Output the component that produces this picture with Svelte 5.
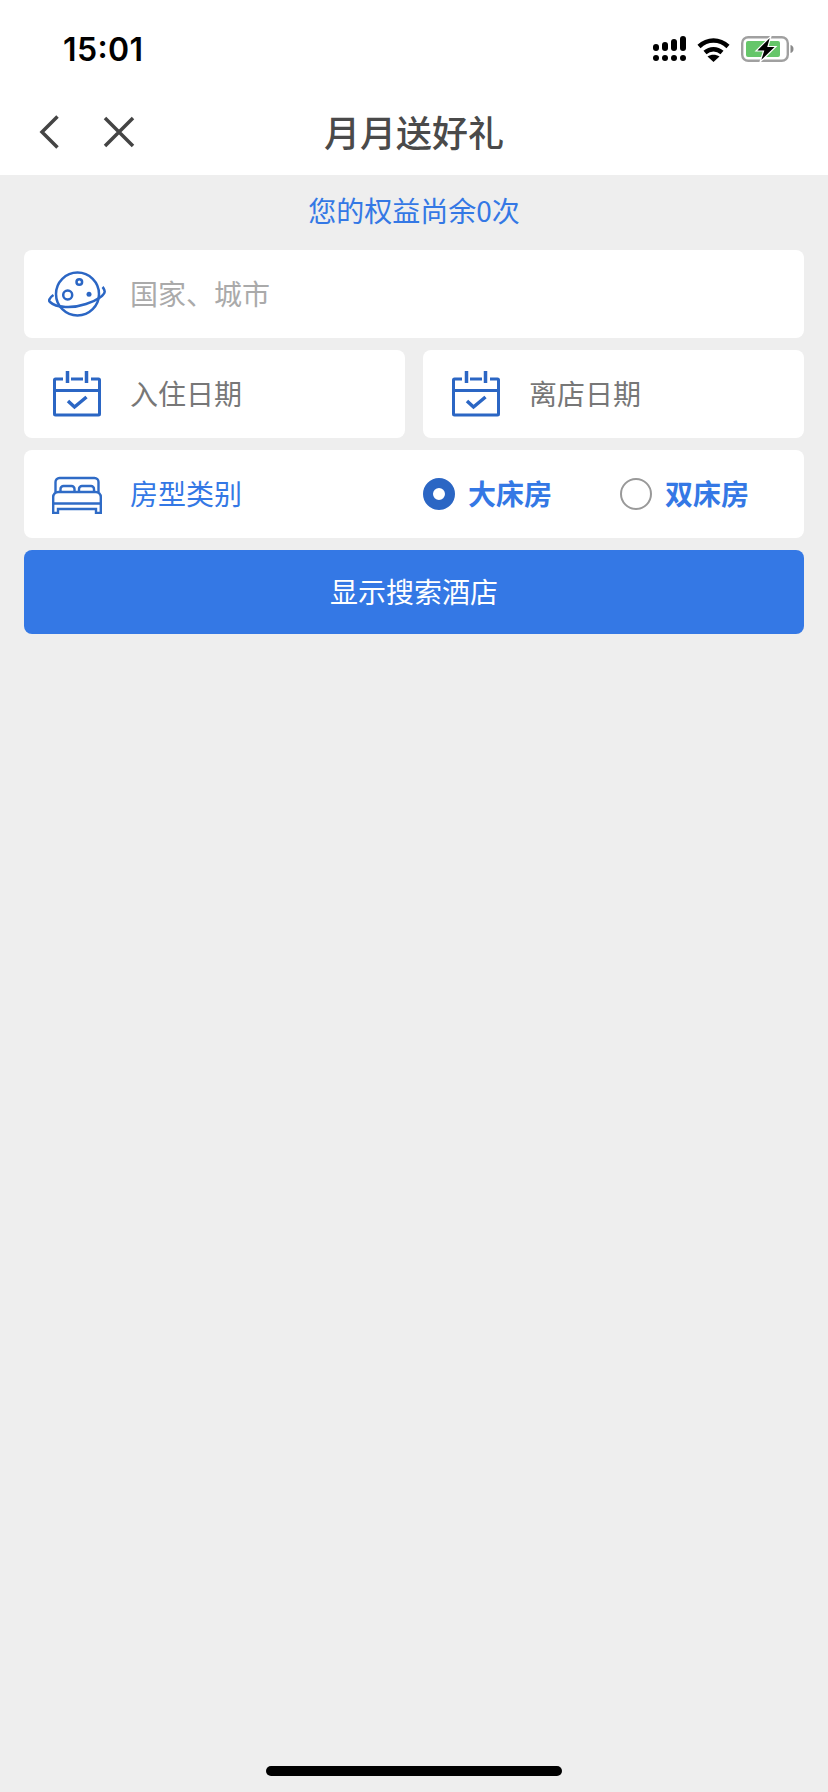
<script>
  let roomType = $state('king')
</script>

{#snippet calendar()}
  <svg width="48" height="46" viewBox="0 0 48 46" fill="none" stroke="#2b66c4" stroke-width="3">
    <path d="M10 8H2.500a1 1 0 0 0-1 1v34a1 1 0 0 0 1 1h43a1 1 0 0 0 1-1V9a1 1 0 0 0-1-1H38" />
    <path d="M18 8h12" />
    <path d="M14.500 0v12M33.500 0v12" stroke-width="3.500" />
    <path d="M1.500 19.500h45" />
    <path d="M15 30l6.500 6 12-10" stroke-width="3.500" />
  </svg>
{/snippet}

<div class="page">
  <div class="top">
    <div class="status">
      <span class="time">15:01</span>
      <div class="status-icons">
        <svg width="33" height="26" viewBox="0 0 33 26" fill="#000">
          <rect x="0" y="8" width="6" height="7" rx="3" />
          <rect x="9" y="6" width="6" height="9" rx="3" />
          <rect x="18" y="3" width="6" height="12" rx="3" />
          <rect x="27" y="0" width="6" height="15" rx="3" />
          <circle cx="3" cy="22" r="3" />
          <circle cx="12" cy="22" r="3" />
          <circle cx="21" cy="22" r="3" />
          <circle cx="30" cy="22" r="3" />
        </svg>
        <svg width="33" height="25" viewBox="0 0 33 25" fill="none" stroke="#000" stroke-width="4.500">
          <path d="M2 9.500C10.500 1.500 22.500 1.500 31 9.500" />
          <path d="M8 15.500C13 11 20 11 25 15.500" />
          <path d="M16.500 25l-6-5.500c3.500-2.500 8.500-2.500 12 0z" fill="#000" stroke="none" />
        </svg>
        <svg width="54" height="26" viewBox="0 0 54 26">
          <rect x="1.200" y="1.200" width="45.600" height="23.600" rx="6" fill="#fff" stroke="#a0a0a0" stroke-width="2.400" />
          <rect x="5" y="5" width="34" height="16" rx="2" fill="#66c66a" />
          <path d="M49.500 9c2 .5 3 2 3 4s-1 3.500-3 4z" fill="#8a8a8a" />
          <path d="M30 0 15 15h7.500L19 26l16-15.500h-8L30 0z" fill="#000" stroke="#fff" stroke-width="1.200" />
        </svg>
      </div>
    </div>
    <div class="nav">
      <div class="nav-left">
        <svg width="20" height="34" viewBox="0 0 20 34" fill="none" stroke="#444" stroke-width="3.500">
          <path d="M18.500 1.500 3 17l15.500 15.500" />
        </svg>
        <svg width="32" height="32" viewBox="0 0 32 32" fill="none" stroke="#444" stroke-width="3.500">
          <path d="M2 2l28 28M30 2 2 30" />
        </svg>
      </div>
      <div class="title">月月送好礼</div>
    </div>
  </div>

  <p class="quota">您的权益尚余0次</p>

  <div class="form">
    <div class="card">
      <div class="icon">
        <svg width="58" height="46" viewBox="0 0 58 46" fill="none" stroke="#2b66c4" stroke-width="2.500">
          <circle cx="29.500" cy="23" r="21.500" />
          <path d="M5.500 24C1 27 .5 30 2 31c6 6 23 6.500 36 2 11-3.500 20-9.500 18.500-13.500-.5-1.500-1-2.500-2-3.500" />
          <circle cx="19.700" cy="24" r="4.500" />
          <circle cx="31.300" cy="11" r="2.800" />
          <circle cx="41" cy="23.300" r="2.500" fill="#2b66c4" stroke="none" />
        </svg>
      </div>
      <span class="text placeholder">国家、城市</span>
    </div>

    <div class="dates">
      <div class="card">
        <div class="icon">{@render calendar()}</div>
        <span class="text date-label">入住日期</span>
      </div>
      <div class="card">
        <div class="icon">{@render calendar()}</div>
        <span class="text date-label">离店日期</span>
      </div>
    </div>

    <div class="card">
      <div class="icon bed">
        <svg width="50" height="38" viewBox="0 0 50 38" fill="none" stroke="#2f6bc6" stroke-width="2.400">
          <path d="M3.500 16V6a4 4 0 0 1 4-4h35a4 4 0 0 1 4 4v10" />
          <path d="M8.500 16v-3a3 3 0 0 1 3-3h8a3 3 0 0 1 3 3v3M27 16v-3a3 3 0 0 1 3-3h9a3 3 0 0 1 3 3v3" />
          <path d="M1.200 37V21a5 5 0 0 1 5-5h37.600a5 5 0 0 1 5 5v16h-4.800v-4H6v4z" />
          <path d="M1.200 27.500h47.600" />
        </svg>
      </div>
      <span class="text room-label">房型类别</span>
      <div class="radios">
        <button class="radio" class:on={roomType === 'king'} onclick={() => (roomType = 'king')}>
          <span class="dot"></span><span class="text">大床房</span>
        </button>
        <button class="radio" class:on={roomType === 'twin'} onclick={() => (roomType = 'twin')}>
          <span class="dot"></span><span class="text">双床房</span>
        </button>
      </div>
    </div>

    <button class="search"><span class="label">显示搜索酒店</span></button>
  </div>

  <div class="home"></div>
</div>

<style>
  :global(body) {
    margin: 0;
    background: #eeeeee;
  }

  .page {
    display: flex;
    flex-direction: column;
    min-height: 1792px;
    font-family: "Noto Sans CJK SC", "Noto Sans", sans-serif;
    background: #eeeeee;
  }

  .top {
    background: #fff;
    height: 175px;
  }

  .status {
    display: flex;
    justify-content: space-between;
    align-items: center;
    height: 98px;
    padding: 0 33px 0 63px;
  }

  .time {
    font-family: Inter, sans-serif;
    font-size: 32px;
    font-weight: 600;
    font-feature-settings: "case";
    letter-spacing: 0.4px;
    color: #000;
  }

  .status-icons {
    display: flex;
    align-items: center;
    gap: 11px;
  }

  .nav {
    display: grid;
    grid-template-columns: 1fr auto 1fr;
    align-items: center;
    height: 68px;
  }

  .nav-left {
    display: flex;
    align-items: center;
    gap: 44px;
    padding-left: 39px;
  }

  .title {
    font-size: 36px;
    font-weight: 500;
    color: #4a4a4a;
    line-height: 66px;
    padding-bottom: 2px;
  }

  .quota {
    margin: 0;
    height: 75px;
    line-height: 71px;
    text-align: center;
    font-size: 28px;
    color: #3478e5;
  }

  .form {
    display: flex;
    flex-direction: column;
    gap: 12px;
    padding: 0 24px;
  }

  .dates {
    display: grid;
    grid-template-columns: 1fr 1fr;
    gap: 18px;
  }

  .card {
    display: flex;
    align-items: center;
    height: 88px;
    background: #fff;
    border-radius: 8px;
    font-size: 28px;
  }

  .text {
    margin-bottom: 3px;
  }

  .icon {
    display: flex;
    justify-content: center;
    flex: none;
    width: 58px;
    margin: 0 25px 0 24px;
  }

  .bed {
    padding-top: 2px;
  }

  .placeholder {
    color: #aaaaaa;
    margin-left: -1px;
  }

  .date-label {
    color: #777777;
    margin-left: -1px;
  }

  .room-label {
    flex: 1;
    color: #3478e5;
    margin-left: -1px;
  }

  .radios {
    display: flex;
    gap: 68px;
    padding-right: 55px;
  }

  .radio {
    display: flex;
    align-items: center;
    gap: 13px;
    padding: 0;
    border: 0;
    background: none;
    font: inherit;
    font-weight: 700;
    color: #3478e5;
  }

  .dot {
    box-sizing: border-box;
    width: 32px;
    height: 32px;
    border: 2px solid #999;
    border-radius: 50%;
    background: #fff;
  }

  .radio.on .dot {
    border: 10px solid #2b66c4;
  }

  .search {
    height: 84px;
    border: 0;
    border-radius: 8px;
    background: #3478e5;
    color: #fff;
    font: inherit;
    font-size: 28px;
  }

  .label {
    display: block;
    margin-bottom: 2px;
  }

  .home {
    align-self: center;
    width: 296px;
    height: 10px;
    margin-top: auto;
    margin-bottom: 16px;
    border-radius: 5px;
    background: #000;
  }
</style>
